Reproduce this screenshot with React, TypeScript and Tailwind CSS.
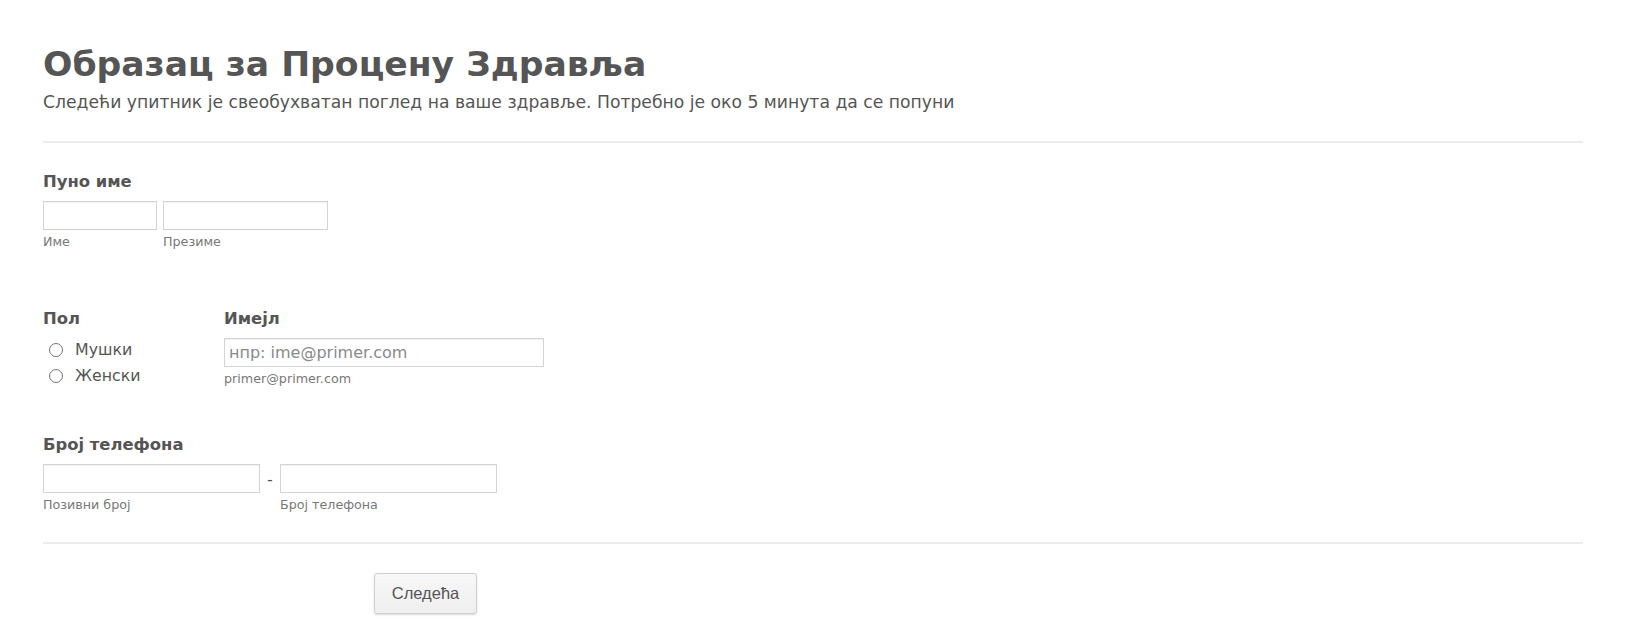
import React from "react";

const font = { fontFamily: '"DejaVu Sans", Verdana, sans-serif' };

const Label = ({ children }: { children: React.ReactNode }) => (
  <div className="text-[16.4px] leading-[18px] font-bold text-[#555]">{children}</div>
);

const Sub = ({ children }: { children: React.ReactNode }) => (
  <div className="mt-[5px] text-[12.7px] leading-[14px] text-[#777]">{children}</div>
);

const Input = ({ className = "", placeholder }: { className?: string; placeholder?: string }) => (
  <input
    placeholder={placeholder}
    className={
      "h-[29px] border border-[#d4d4d4] bg-white px-[4px] text-[16px] text-[#555] placeholder:text-[#8a8a8a] shadow-[inset_0_1px_1px_rgba(0,0,0,0.06)] outline-none " +
      className
    }
  />
);

const Radio = ({ label }: { label: string }) => (
  <label className="flex h-[26px] items-center">
    <span className="ml-[6px] h-[14px] w-[14px] rounded-full border border-[#767676] bg-white" />
    <span className="ml-[12px] text-[15.8px] text-[#555]">{label}</span>
  </label>
);

export default function App() {
  return (
    <div className="min-h-screen bg-white pl-[43px] pr-[45px] pt-[45px]" style={font}>
      {/* Header */}
      <h1 className="text-[34.6px] leading-[38px] font-bold text-[#555]">Образац за Процену Здравља</h1>
      <p className="mt-[9px] text-[17.2px] leading-[20px] text-[#555]">
        Следећи упитник је свеобухватан поглед на ваше здравље. Потребно је око 5 минута да се попуни
      </p>
      <div className="mt-[29px] h-[2px] bg-[#ececec]" />

      {/* Full name */}
      <div className="mt-[30px]">
        <Label>Пуно име</Label>
        <div className="mt-[10px] flex gap-[6px]">
          <div className="flex flex-col">
            <Input className="w-[114px]" />
            <Sub>Име</Sub>
          </div>
          <div className="flex flex-col">
            <Input className="w-[165px]" />
            <Sub>Презиме</Sub>
          </div>
        </div>
      </div>

      {/* Gender + email */}
      <div className="mt-[61px] flex">
        <div className="w-[181px]">
          <Label>Пол</Label>
          <div className="mt-[9px] flex flex-col">
            <Radio label="Мушки" />
            <Radio label="Женски" />
          </div>
        </div>
        <div>
          <Label>Имејл</Label>
          <div className="mt-[10px] flex flex-col">
            <Input className="w-[320px] h-[28px]" placeholder="нпр: ime@primer.com" />
            <Sub>primer@primer.com</Sub>
          </div>
        </div>
      </div>

      {/* Phone */}
      <div className="mt-[47px]">
        <Label>Број телефона</Label>
        <div className="mt-[10px] flex items-start">
          <div className="flex flex-col">
            <Input className="w-[217px]" />
            <Sub>Позивни број</Sub>
          </div>
          <span className="w-[20px] pt-[4px] text-center text-[16px] text-[#555]">-</span>
          <div className="flex flex-col">
            <Input className="w-[217px]" />
            <Sub>Број телефона</Sub>
          </div>
        </div>
      </div>

      <div className="mt-[30px] h-[2px] bg-[#ececec]" />

      {/* Footer */}
      <div className="mt-[29px] pl-[331px] pb-[30px]">
        <button
          className="h-[41px] w-[103px] rounded-[3px] border border-[#cfcfcf] bg-gradient-to-b from-[#f7f7f7] to-[#efefef] text-[16.5px] text-[#555] shadow-[0_1px_2px_rgba(0,0,0,0.15)]"
          style={{ fontFamily: '"Liberation Sans", Arial, sans-serif' }}
        >
          Следећа
        </button>
      </div>
    </div>
  );
}
